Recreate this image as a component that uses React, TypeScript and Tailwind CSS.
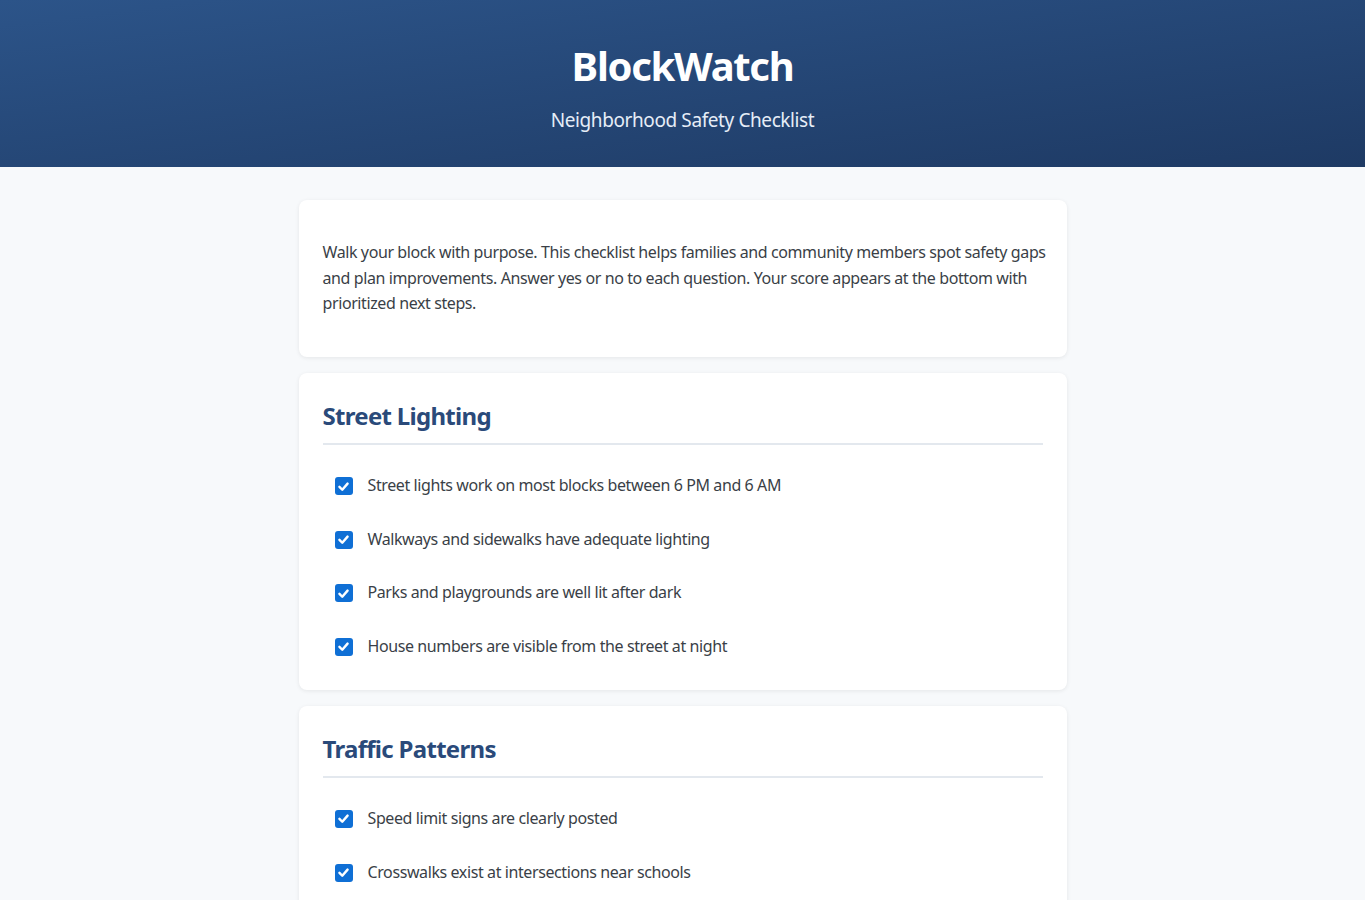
import React from "react";

const sections = [
  {
    title: "Street Lighting",
    items: [
      "Street lights work on most blocks between 6 PM and 6 AM",
      "Walkways and sidewalks have adequate lighting",
      "Parks and playgrounds are well lit after dark",
      "House numbers are visible from the street at night",
    ],
  },
  {
    title: "Traffic Patterns",
    items: [
      "Speed limit signs are clearly posted",
      "Crosswalks exist at intersections near schools",
      "Traffic calming measures slow cars on residential streets",
      "Stop signs and signals are visible and working",
    ],
  },
];

function Check() {
  return (
    <span className="flex h-[18px] w-[18px] shrink-0 items-center justify-center rounded-[3px] bg-[#0f6fd5]">
      <svg width="13" height="13" viewBox="0 0 16 16" fill="none">
        <path d="M3 8.5 L6.5 12 L13 4.5" stroke="white" strokeWidth="3" strokeLinecap="round" strokeLinejoin="round" />
      </svg>
    </span>
  );
}

export default function App() {
  return (
    <div
      className="min-h-screen bg-[#f7f9fb] text-[#333a44]"
      style={{ fontFamily: '"Noto Sans", "Open Sans", sans-serif' }}
    >
      <header className="flex h-[167px] flex-col items-center bg-gradient-to-br from-[#2c5489] to-[#1e3a64] pt-[40px] text-white">
        <h1 className="text-[40px] font-bold leading-[52px] tracking-[-1.3px]">BlockWatch</h1>
        <p className="mt-[15px] text-[19px] leading-[26px] tracking-[-0.4px] text-[#e6edf7]">Neighborhood Safety Checklist</p>
      </header>
      <main className="mx-auto flex w-[768px] flex-col gap-4 pt-[33px] pb-10">
        <section className="rounded-lg bg-white pl-6 pr-4 py-10 shadow-[0_1px_4px_rgba(0,0,0,0.08)]">
          <p className="text-[16px] leading-[25.6px] tracking-[-0.4px] text-[#3a3f47]">
            Walk your block with purpose. This checklist helps families and community members spot safety gaps and
            plan improvements. Answer yes or no to each question. Your score appears at the bottom with prioritized
            next steps.
          </p>
        </section>
        {sections.map((s) => (
          <section key={s.title} className="rounded-lg bg-white px-6 pt-[24.5px] pb-[16px] shadow-[0_1px_4px_rgba(0,0,0,0.08)]">
            <h2 className="border-b-2 border-[#e3e8ee] pb-2 text-[24px] font-bold leading-[38px] tracking-[-0.7px] text-[#2a4a7a]">
              {s.title}
            </h2>
            <ul className="mt-[14px] flex flex-col">
              {s.items.map((it) => (
                <li key={it} className="flex items-center gap-[15px] py-[14px] pl-3">
                  <Check />
                  <span className="text-[16px] leading-[25.6px] tracking-[-0.4px] text-[#3a3f47]">{it}</span>
                </li>
              ))}
            </ul>
          </section>
        ))}
      </main>
    </div>
  );
}
